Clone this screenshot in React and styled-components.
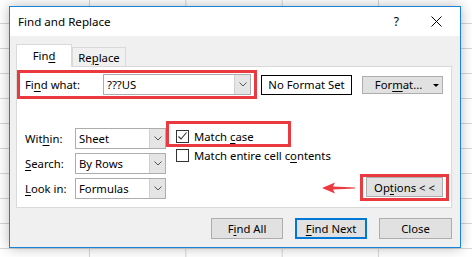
import React from "react";
import styled, { createGlobalStyle } from "styled-components";

const Global = createGlobalStyle`
  html, body { margin: 0; padding: 0; }
  body {
    width: 472px;
    height: 257px;
    overflow: hidden;
    background-color: #fff;
    background-image:
      linear-gradient(to bottom, #d6d6d6 1px, transparent 1px),
      linear-gradient(to right, #d6d6d6 1px, transparent 1px);
    background-size: 100% 25px, 96.33px 100%;
    background-position: 0 23px, 89px 0;
    font-family: "Segoe UI", "Noto Sans", sans-serif;
    font-size: 11.3px;
    color: #000;
  }
  u { text-underline-offset: 2px; text-decoration-thickness: 1px; }
`;

const Page = styled.div`
  box-sizing: border-box;
  width: 472px;
  height: 257px;
  padding: 6px 11px 9px 9px;
`;

const Dialog = styled.div`
  box-sizing: border-box;
  width: 452px;
  height: 242px;
  border: 1px solid #1883d7;
  background: #f0f0f0;
  display: flex;
  flex-direction: column;
  box-shadow: 0 0 12px rgba(0, 0, 0, 0.28);
`;

const TitleBar = styled.div`
  height: 29px;
  flex: none;
  background: #fff;
  display: flex;
  align-items: center;
  padding: 0 18px 0 8px;
`;

const Title = styled.span`
  font-size: 11.6px;
`;

const Help = styled.span`
  margin-left: auto;
  margin-right: 32px;
  font-size: 12px;
`;

const Body = styled.div`
  flex: 1;
  padding: 8px 8px 8px 6px;
  display: flex;
  flex-direction: column;
`;

const Tabs = styled.div`
  display: flex;
  align-items: flex-end;
  height: 23px;
  margin-bottom: -1px;
  position: relative;
  z-index: 1;
`;

const Tab = styled.div`
  box-sizing: border-box;
  width: ${(p) => p.$w}px;
  height: ${(p) => (p.$active ? 23 : 19)}px;
  margin-bottom: ${(p) => (p.$active ? 0 : 1)}px;
  background: ${(p) => (p.$active ? "#fff" : "#f0f0f0")};
  border: 1px solid #d9d9d9;
  border-bottom: none;
  display: flex;
  align-items: center;
  justify-content: center;
  padding-bottom: ${(p) => (p.$active ? 2 : 0)}px;
`;

const Panel = styled.div`
  box-sizing: border-box;
  height: 142px;
  background: #fff;
  border: 1px solid #d9d9d9;
  padding: 0 2px 0 0;
  display: flex;
  flex-direction: column;
`;

const TopRow = styled.div`
  display: flex;
  align-items: center;
  margin-top: 3px;
`;

const RedBox = styled.div`
  box-sizing: border-box;
  flex: none;
  border: 3px solid #ea3a3f;
  width: ${(p) => p.$w}px;
  height: ${(p) => p.$h}px;
  display: flex;
  align-items: ${(p) => p.$align || "center"};
  padding: ${(p) => p.$pad || "0"};
`;

const Label = styled.span`
  width: ${(p) => p.$w}px;
  flex: none;
  white-space: nowrap;
`;

const Combo = styled.div`
  box-sizing: border-box;
  flex: none;
  width: ${(p) => p.$w}px;
  height: 21px;
  border: 1px solid #adadad;
  background: #fff;
  display: flex;
  align-items: stretch;
`;

const ComboText = styled.span`
  flex: 1;
  display: flex;
  align-items: center;
  padding-left: 3px;
  white-space: nowrap;
`;

const ComboDrop = styled.span`
  width: 15px;
  background: #e5e5e5;
  border-left: 1px solid #d0d0d0;
  display: flex;
  align-items: center;
  justify-content: center;
`;

const FormatBox = styled.div`
  box-sizing: border-box;
  flex: none;
  width: 91px;
  height: 20px;
  margin-left: 4px;
  border: 1px solid #000;
  background: #fff;
  display: flex;
  align-items: center;
  justify-content: center;
`;

const Button = styled.div`
  box-sizing: border-box;
  flex: none;
  width: ${(p) => p.$w}px;
  height: ${(p) => p.$h || 21}px;
  margin-left: ${(p) => p.$ml || 0}px;
  background: #e1e1e1;
  border: ${(p) => (p.$default ? "2px solid #0078d7" : "1px solid #adadad")};
  display: flex;
  align-items: center;
  justify-content: center;
  position: relative;
  white-space: nowrap;
`;

const Caret = styled.span`
  position: absolute;
  right: 3px;
  top: 50%;
  margin-top: -1px;
  width: 0;
  height: 0;
  border-left: 3px solid transparent;
  border-right: 3px solid transparent;
  border-top: 3px solid #000;
`;

const Lower = styled.div`
  display: flex;
  align-items: flex-start;
  margin-top: 22px;
`;

const OptGrid = styled.div`
  display: grid;
  flex: none;
  grid-template-columns: 50px 91px;
  grid-auto-rows: 21px;
  row-gap: 4px;
  align-items: center;
  padding: 7px 0 0 8px;
`;

const Checks = styled.div`
  flex: 1;
  min-width: 0;
  display: flex;
  flex-direction: column;
`;

const CheckRow = styled.div`
  display: flex;
  align-items: center;
  gap: 5px;
  height: 13px;
  margin: ${(p) => p.$m || "0"};
  white-space: nowrap;
`;

const Box = styled.span`
  box-sizing: border-box;
  width: 13px;
  height: 13px;
  flex: none;
  border: 1px solid #333;
  background: #fff;
  display: flex;
  align-items: center;
  justify-content: center;
`;

const OptionsArea = styled.div`
  flex: none;
  margin-top: 53px;
  display: flex;
  align-items: center;
`;

const Arrow = styled.svg`
  display: block;
  margin-right: 5px;
`;

const Footer = styled.div`
  display: flex;
  justify-content: flex-end;
  gap: 12px;
  margin-top: 10px;
`;

const Chevron = () => (
  <svg width="8" height="5" viewBox="0 0 8 5">
    <path d="M0.5 0.5 L4 4 L7.5 0.5" fill="none" stroke="#555" strokeWidth="1" />
  </svg>
);

const Check = ({ checked }) => (
  <Box>
    {checked && (
      <svg width="11" height="11" viewBox="0 0 11 11">
        <path d="M1.5 5.5 L4 8 L9.5 1.5" fill="none" stroke="#333" strokeWidth="1.1" />
      </svg>
    )}
  </Box>
);

const Select = ({ w, children }) => (
  <Combo $w={w}>
    <ComboText>{children}</ComboText>
    <ComboDrop>
      <Chevron />
    </ComboDrop>
  </Combo>
);

export default function App() {
  return (
    <>
      <Global />
      <Page>
        <Dialog>
          <TitleBar>
            <Title>Find and Replace</Title>
            <Help>?</Help>
            <svg width="11" height="11" viewBox="0 0 11 11">
              <path d="M0.5 0.5 L10.5 10.5 M10.5 0.5 L0.5 10.5" stroke="#000" strokeWidth="1" />
            </svg>
          </TitleBar>
          <Body>
            <Tabs>
              <Tab $active $w={56}>
                <span>
                  Fin<u>d</u>
                </span>
              </Tab>
              <Tab $w={54}>
                <span>
                  Re<u>p</u>lace
                </span>
              </Tab>
            </Tabs>
            <Panel>
              <TopRow>
                <RedBox $w={240} $h={29} $pad="0 0 0 5px">
                  <Label $w={78}>
                    Fi<u>n</u>d what:
                  </Label>
                  <Select w={148}>???US</Select>
                </RedBox>
                <FormatBox>No Format Set</FormatBox>
                <Button $w={81} $h={18} $ml={10}>
                  <span style={{ marginRight: 8 }}>
                    For<u>m</u>at...
                  </span>
                  <Caret />
                </Button>
              </TopRow>
              <Lower>
                <OptGrid>
                  <Label $w={50}>
                    Wit<u>h</u>in:
                  </Label>
                  <Select w={91}>Sheet</Select>
                  <Label $w={50}>
                    <u>S</u>earch:
                  </Label>
                  <Select w={91}>By Rows</Select>
                  <Label $w={50}>
                    <u>L</u>ook in:
                  </Label>
                  <Select w={91}>Formulas</Select>
                </OptGrid>
                <Checks>
                  <RedBox $w={125} $h={26} $align="flex-start" $pad="6px 0 0 7px">
                    <CheckRow>
                      <Check checked />
                      <span>
                        Match <u>c</u>ase
                      </span>
                    </CheckRow>
                  </RedBox>
                  <CheckRow $m="2px 0 0 10px">
                    <Check />
                    <span>
                      Match entire cell c<u>o</u>ntents
                    </span>
                  </CheckRow>
                </Checks>
                <OptionsArea>
                  <Arrow width="33" height="12" viewBox="0 0 33 12">
                    <path d="M0 6 L13 0.5 L11 4.6 L33 5.4 L33 6.6 L11 7.4 L13 11.5 Z" fill="#ea3a3f" />
                  </Arrow>
                  <RedBox $w={89} $h={27} $align="flex-start" $pad="0 3px">
                    <Button $w={77} $h={20}>
                      Op<u>t</u>ions &lt; &lt;
                    </Button>
                  </RedBox>
                </OptionsArea>
              </Lower>
            </Panel>
            <Footer>
              <Button $w={72}>
                F<u>i</u>nd All
              </Button>
              <Button $w={72} $default>
                <span>
                  <u>F</u>ind Next
                </span>
              </Button>
              <Button $w={73}>Close</Button>
            </Footer>
          </Body>
        </Dialog>
      </Page>
    </>
  );
}
